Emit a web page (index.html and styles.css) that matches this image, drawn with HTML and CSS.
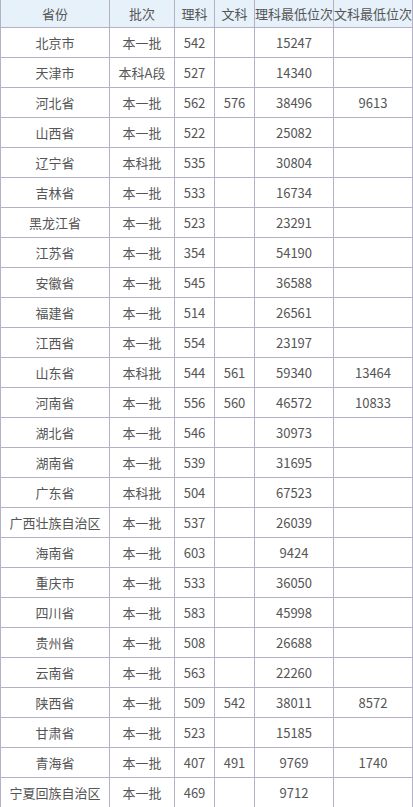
FILE: index.html
```html
<!DOCTYPE html>
<html lang="zh-CN">
<head>
<meta charset="utf-8">
<title>录取分数</title>
<link rel="stylesheet" href="styles.css">
</head>
<body>
<table class="score-table">
  <colgroup>
    <col class="c-prov"><col class="c-batch"><col class="c-sci"><col class="c-art"><col class="c-rank"><col class="c-rank2">
  </colgroup>
  <thead>
    <tr><th>省份</th><th>批次</th><th>理科</th><th>文科</th><th>理科最低位次</th><th>文科最低位次</th></tr>
  </thead>
  <tbody>
    <tr><td>北京市</td><td>本一批</td><td>542</td><td></td><td>15247</td><td></td></tr>
    <tr><td>天津市</td><td>本科A段</td><td>527</td><td></td><td>14340</td><td></td></tr>
    <tr><td>河北省</td><td>本一批</td><td>562</td><td>576</td><td>38496</td><td>9613</td></tr>
    <tr><td>山西省</td><td>本一批</td><td>522</td><td></td><td>25082</td><td></td></tr>
    <tr><td>辽宁省</td><td>本科批</td><td>535</td><td></td><td>30804</td><td></td></tr>
    <tr><td>吉林省</td><td>本一批</td><td>533</td><td></td><td>16734</td><td></td></tr>
    <tr><td>黑龙江省</td><td>本一批</td><td>523</td><td></td><td>23291</td><td></td></tr>
    <tr><td>江苏省</td><td>本一批</td><td>354</td><td></td><td>54190</td><td></td></tr>
    <tr><td>安徽省</td><td>本一批</td><td>545</td><td></td><td>36588</td><td></td></tr>
    <tr><td>福建省</td><td>本一批</td><td>514</td><td></td><td>26561</td><td></td></tr>
    <tr><td>江西省</td><td>本一批</td><td>554</td><td></td><td>23197</td><td></td></tr>
    <tr><td>山东省</td><td>本科批</td><td>544</td><td>561</td><td>59340</td><td>13464</td></tr>
    <tr><td>河南省</td><td>本一批</td><td>556</td><td>560</td><td>46572</td><td>10833</td></tr>
    <tr><td>湖北省</td><td>本一批</td><td>546</td><td></td><td>30973</td><td></td></tr>
    <tr><td>湖南省</td><td>本一批</td><td>539</td><td></td><td>31695</td><td></td></tr>
    <tr><td>广东省</td><td>本科批</td><td>504</td><td></td><td>67523</td><td></td></tr>
    <tr><td>广西壮族自治区</td><td>本一批</td><td>537</td><td></td><td>26039</td><td></td></tr>
    <tr><td>海南省</td><td>本一批</td><td>603</td><td></td><td>9424</td><td></td></tr>
    <tr><td>重庆市</td><td>本一批</td><td>533</td><td></td><td>36050</td><td></td></tr>
    <tr><td>四川省</td><td>本一批</td><td>583</td><td></td><td>45998</td><td></td></tr>
    <tr><td>贵州省</td><td>本一批</td><td>508</td><td></td><td>26688</td><td></td></tr>
    <tr><td>云南省</td><td>本一批</td><td>563</td><td></td><td>22260</td><td></td></tr>
    <tr><td>陕西省</td><td>本一批</td><td>509</td><td>542</td><td>38011</td><td>8572</td></tr>
    <tr><td>甘肃省</td><td>本一批</td><td>523</td><td></td><td>15185</td><td></td></tr>
    <tr><td>青海省</td><td>本一批</td><td>407</td><td>491</td><td>9769</td><td>1740</td></tr>
    <tr><td>宁夏回族自治区</td><td>本一批</td><td>469</td><td></td><td>9712</td><td></td></tr>
  </tbody>
</table>
</body>
</html>
```
FILE: styles.css
```css
html, body {
  margin: 0;
  padding: 0;
  background: #ffffff;
}
.score-table {
  border-collapse: collapse;
  table-layout: fixed;
  width: 412px;
  font-family: "Noto Sans CJK SC", "Noto Sans", sans-serif;
  font-size: 13px;
  color: #555555;
}
.c-prov { width: 109px; }
.c-batch { width: 65px; }
.c-sci { width: 40px; }
.c-art { width: 40px; }
.c-rank { width: 79px; }
.c-rank2 { width: 79px; }
.score-table th,
.score-table td {
  border: 1px solid #b4b1c6;
  text-align: center;
  vertical-align: middle;
  padding: 0;
  white-space: nowrap;
  overflow: hidden;
  font-weight: normal;
}
.score-table thead th {
  background: #e6f1fa;
  height: 27px;
  border-top: none;
}
.score-table tbody td {
  height: 29px;
}
```
